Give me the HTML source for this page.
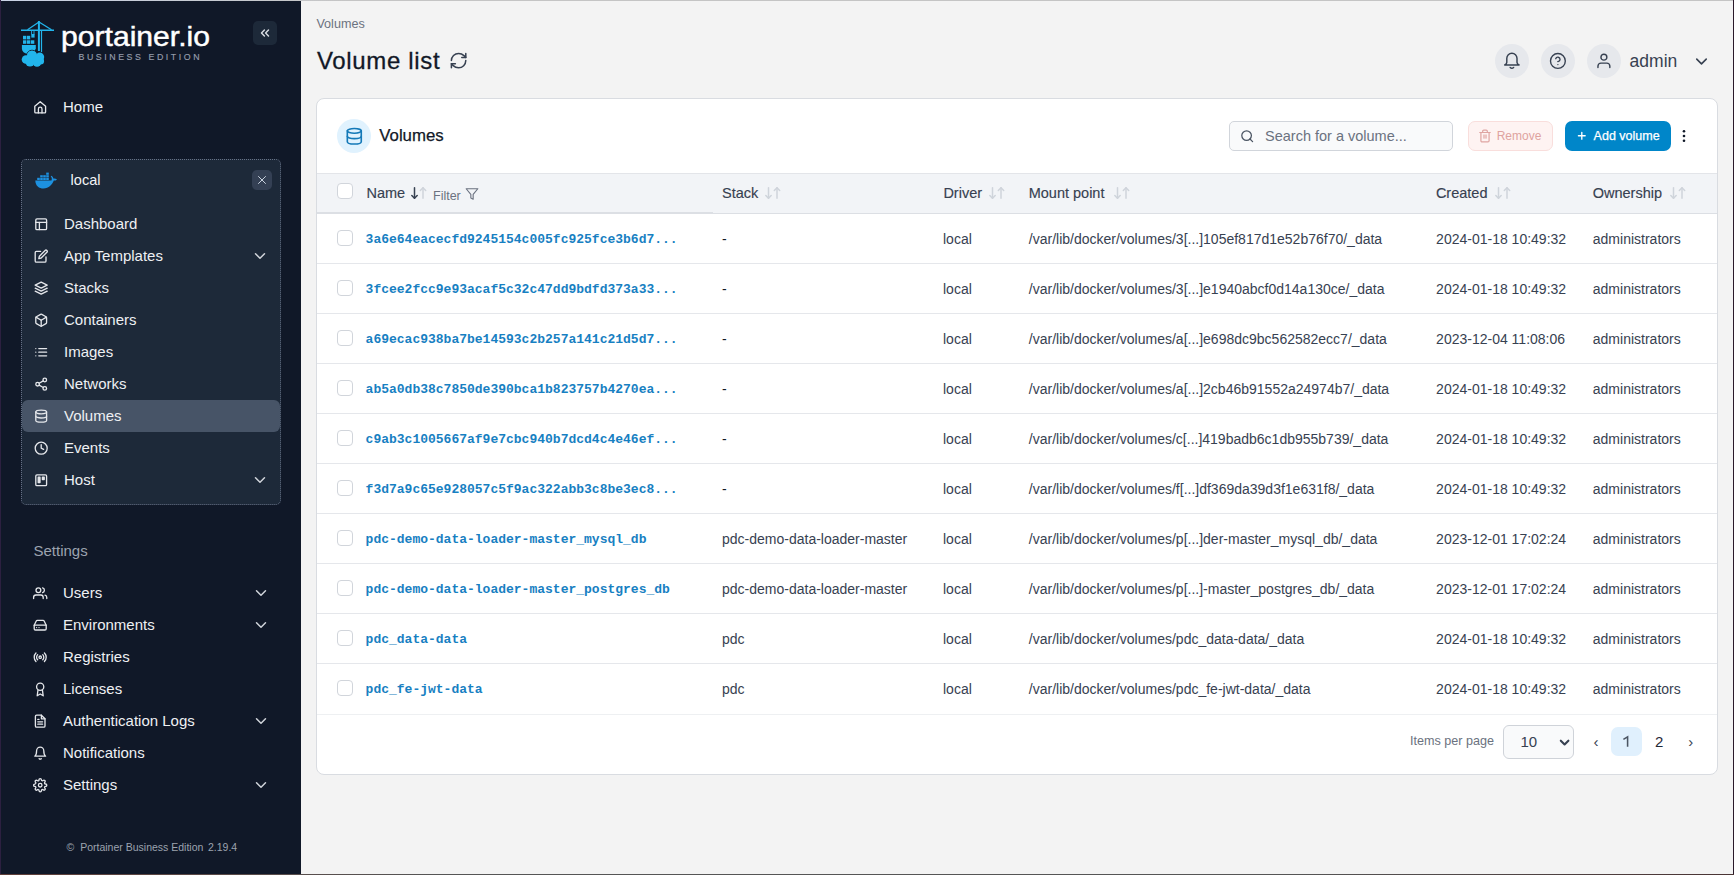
<!DOCTYPE html>
<html><head><meta charset="utf-8"><title>Volume list</title>
<style>
html,body{margin:0;padding:0;width:1734px;height:875px;overflow:hidden;background:#f3f3f3;}
body{position:relative;font-family:"Liberation Sans", sans-serif;}
.t{position:absolute;white-space:nowrap;line-height:1;}
.s{font-family:"Liberation Sans", sans-serif;}
.m{font-family:"Liberation Mono", monospace;}
.b{position:absolute;}
.ic{position:absolute;overflow:visible;}
</style></head><body>
<div class="b" style="left:0px;top:0px;width:301px;height:875px;background:#101828;"></div>
<svg class="ic" style="left:18px;top:18px;width:40px;height:52px" viewBox="18 18 40 52">
<g stroke="#22b5ec" fill="none" stroke-linecap="butt">
<line x1="21" y1="30.2" x2="54" y2="30.2" stroke-width="1.5"/>
<line x1="27.5" y1="29.8" x2="39" y2="22" stroke-width="1.3"/>
<line x1="39" y1="22" x2="51.5" y2="29.8" stroke-width="1.3"/>
<line x1="38.9" y1="21" x2="38.9" y2="51" stroke-width="2"/>
<line x1="41.5" y1="30.2" x2="41.5" y2="52" stroke-width="1.2"/>
<line x1="31.6" y1="30.5" x2="31.6" y2="34.5" stroke-width="0.9"/>
<line x1="34" y1="30.5" x2="34" y2="34.5" stroke-width="0.9"/>
</g>
<g fill="#22b5ec">
<rect x="31.3" y="34" width="3.3" height="3.6"/>
<rect x="23" y="35.8" width="3.3" height="3.6"/>
<rect x="26.9" y="35.8" width="3.3" height="3.6"/>
<rect x="23" y="40.3" width="3.3" height="3.5"/>
<rect x="26.9" y="40.3" width="3.3" height="3.5"/>
<rect x="30.8" y="40.3" width="3.5" height="3.5"/>
<path d="M21.9 45h13.9v3.5c-1 3.5-4 5.3-8 5.3c-3.5 0-5.9-2.5-5.9-5.5z"/>
</g>
<g fill="#22b5ec" stroke="#111827" stroke-width="0.9">
<circle cx="32" cy="55.5" r="5.3"/>
</g>
<g fill="#22b5ec">
<circle cx="39.8" cy="57" r="4.4"/>
<circle cx="26" cy="59.5" r="4.3"/>
<circle cx="30" cy="62" r="4.6"/>
<circle cx="37" cy="62.3" r="4.4"/>
<circle cx="40.5" cy="61" r="3.6"/>
<circle cx="32" cy="55.5" r="4.85"/>
<rect x="26" y="56" width="14" height="6"/>
</g></svg>
<svg class="ic" style="left:0;top:0;width:301px;height:80px" viewBox="0 0 301 80">
<text x="61" y="46.3" font-family="Liberation Sans" font-size="27.5" fill="#ffffff" stroke="#ffffff" stroke-width="0.45" textLength="149" lengthAdjust="spacingAndGlyphs">portainer.io</text>
<text x="78.5" y="59.7" font-family="Liberation Sans" font-weight="400" font-size="8.8" fill="#959dac" stroke="#959dac" stroke-width="0.15" textLength="121" lengthAdjust="spacing">BUSINESS EDITION</text>
</svg>
<div class="b" style="left:253px;top:21px;width:24px;height:24px;background:#1d2939;border-radius:5px;"></div>
<svg class="ic" style="left:258px;top:26px;width:14px;height:14px;" viewBox="0 0 24 24" fill="none" stroke="#d9dde3" stroke-width="2.5" stroke-linecap="round" stroke-linejoin="round"><polyline points="11 17 6 12 11 7"/><polyline points="18 17 13 12 18 7"/></svg>
<svg class="ic" style="left:32.599999999999994px;top:100.0px;width:14.4px;height:14.4px;" viewBox="0 0 24 24" fill="none" stroke="#e5e7eb" stroke-width="2.2" stroke-linecap="round" stroke-linejoin="round"><path d="M3 10.5 12 3l9 7.5V20a1.5 1.5 0 0 1-1.5 1.5h-15A1.5 1.5 0 0 1 3 20z"/><path d="M9 21.5V15a3 3 0 0 1 6 0v6.5"/></svg>
<div class="t s " style="left:63px;top:99.40px;font-size:15px;color:#eef0f3;">Home</div>
<div class="b" style="left:21px;top:159px;width:260px;height:346px;background:#1d2939;border:1px dotted #667085;border-radius:5px;box-sizing:border-box;"></div>
<svg class="ic" style="left:35px;top:171px;width:23px;height:19px" viewBox="0 0 23 19">
<g fill="#1d91e0">
<rect x="2.2" y="6.8" width="2.6" height="2.2"/><rect x="5.2" y="6.8" width="2.6" height="2.2"/><rect x="8.2" y="6.8" width="2.6" height="2.2"/><rect x="11.2" y="6.8" width="2.6" height="2.2"/>
<rect x="5.2" y="4.2" width="2.6" height="2.2"/><rect x="8.2" y="4.2" width="2.6" height="2.2"/><rect x="11.2" y="4.2" width="2.6" height="2.2"/>
<rect x="11.2" y="1.6" width="2.6" height="2.2"/>
<path d="M0.3 9.5h16.2c0.6-1.6 0.3-3 -0.8-4.2l0.8-0.6c1.2 0.8 1.8 1.8 1.8 2.9c1-0.3 2.5-0.2 3.7 0.8c-0.9 1-2 1.3-3.2 1.2c-1.6 4.2-5 7.9-10.3 7.9c-4.5 0-8-2.6-8.2-8z"/>
</g></svg>
<div class="t s " style="left:70.6px;top:172.63px;font-size:14.5px;color:#f3f4f6;">local</div>
<div class="b" style="left:252px;top:170px;width:20px;height:20px;background:#344054;border-radius:5px;"></div>
<svg class="ic" style="left:255px;top:173px;width:14px;height:14px;" viewBox="0 0 24 24" fill="none" stroke="#cbd5e1" stroke-width="1.7" stroke-linecap="round" stroke-linejoin="round"><line x1="18" y1="6" x2="6" y2="18"/><line x1="6" y1="6" x2="18" y2="18"/></svg>
<div class="b" style="left:22px;top:400px;width:258px;height:32px;background:#475467;border-radius:6px;"></div>
<svg class="ic" style="left:33.8px;top:216.60000000000002px;width:14.4px;height:14.4px;" viewBox="0 0 24 24" fill="none" stroke="#e5e7eb" stroke-width="2.2" stroke-linecap="round" stroke-linejoin="round"><rect x="3" y="3" width="18" height="18" rx="2"/><line x1="3" y1="9" x2="21" y2="9"/><line x1="9" y1="21" x2="9" y2="9"/></svg>
<div class="t s " style="left:64px;top:215.80px;font-size:15px;color:#eef0f3;">Dashboard</div>
<svg class="ic" style="left:33.8px;top:248.60000000000002px;width:14.4px;height:14.4px;" viewBox="0 0 24 24" fill="none" stroke="#e5e7eb" stroke-width="2.2" stroke-linecap="round" stroke-linejoin="round"><path d="M11 4H4a2 2 0 0 0-2 2v14a2 2 0 0 0 2 2h14a2 2 0 0 0 2-2v-7"/><path d="M18.5 2.5a2.121 2.121 0 0 1 3 3L12 15l-4 1 1-4 9.5-9.5z"/></svg>
<div class="t s " style="left:64px;top:247.80px;font-size:15px;color:#eef0f3;">App Templates</div>
<svg class="ic" style="left:251px;top:246.8px;width:18px;height:18px;" viewBox="0 0 24 24" fill="none" stroke="#d1d5db" stroke-width="2" stroke-linecap="round" stroke-linejoin="round"><polyline points="6 9 12 15 18 9"/></svg>
<svg class="ic" style="left:33.8px;top:280.6px;width:14.4px;height:14.4px;" viewBox="0 0 24 24" fill="none" stroke="#e5e7eb" stroke-width="2.2" stroke-linecap="round" stroke-linejoin="round"><polygon points="12 2 2 7 12 12 22 7 12 2"/><polyline points="2 17 12 22 22 17"/><polyline points="2 12 12 17 22 12"/></svg>
<div class="t s " style="left:64px;top:279.80px;font-size:15px;color:#eef0f3;">Stacks</div>
<svg class="ic" style="left:33.8px;top:312.6px;width:14.4px;height:14.4px;" viewBox="0 0 24 24" fill="none" stroke="#e5e7eb" stroke-width="2.2" stroke-linecap="round" stroke-linejoin="round"><path d="M21 16V8a2 2 0 0 0-1-1.73l-7-4a2 2 0 0 0-2 0l-7 4A2 2 0 0 0 3 8v8a2 2 0 0 0 1 1.73l7 4a2 2 0 0 0 2 0l7-4A2 2 0 0 0 21 16z"/><polyline points="3.27 6.96 12 12.01 20.73 6.96"/><line x1="12" y1="22.08" x2="12" y2="12"/></svg>
<div class="t s " style="left:64px;top:311.80px;font-size:15px;color:#eef0f3;">Containers</div>
<svg class="ic" style="left:33.8px;top:344.6px;width:14.4px;height:14.4px;" viewBox="0 0 24 24" fill="none" stroke="#e5e7eb" stroke-width="2.2" stroke-linecap="round" stroke-linejoin="round"><line x1="8" y1="6" x2="21" y2="6"/><line x1="8" y1="12" x2="21" y2="12"/><line x1="8" y1="18" x2="21" y2="18"/><line x1="3" y1="6" x2="3.01" y2="6"/><line x1="3" y1="12" x2="3.01" y2="12"/><line x1="3" y1="18" x2="3.01" y2="18"/></svg>
<div class="t s " style="left:64px;top:343.80px;font-size:15px;color:#eef0f3;">Images</div>
<svg class="ic" style="left:33.8px;top:376.6px;width:14.4px;height:14.4px;" viewBox="0 0 24 24" fill="none" stroke="#e5e7eb" stroke-width="2.2" stroke-linecap="round" stroke-linejoin="round"><circle cx="18" cy="5" r="3"/><circle cx="6" cy="12" r="3"/><circle cx="18" cy="19" r="3"/><line x1="8.59" y1="13.51" x2="15.42" y2="17.49"/><line x1="15.41" y1="6.51" x2="8.59" y2="10.49"/></svg>
<div class="t s " style="left:64px;top:375.80px;font-size:15px;color:#eef0f3;">Networks</div>
<svg class="ic" style="left:33.8px;top:408.6px;width:14.4px;height:14.4px;" viewBox="0 0 24 24" fill="none" stroke="#e5e7eb" stroke-width="2.2" stroke-linecap="round" stroke-linejoin="round"><ellipse cx="12" cy="5" rx="9" ry="3"/><path d="M21 12c0 1.66-4 3-9 3s-9-1.34-9-3"/><path d="M3 5v14c0 1.66 4 3 9 3s9-1.34 9-3V5"/></svg>
<div class="t s " style="left:64px;top:407.80px;font-size:15px;color:#eef0f3;">Volumes</div>
<svg class="ic" style="left:33.8px;top:440.6px;width:14.4px;height:14.4px;" viewBox="0 0 24 24" fill="none" stroke="#e5e7eb" stroke-width="2.2" stroke-linecap="round" stroke-linejoin="round"><circle cx="12" cy="12" r="10"/><polyline points="12 6 12 12 16 14"/></svg>
<div class="t s " style="left:64px;top:439.80px;font-size:15px;color:#eef0f3;">Events</div>
<svg class="ic" style="left:33.8px;top:472.6px;width:14.4px;height:14.4px;" viewBox="0 0 24 24" fill="none" stroke="#e5e7eb" stroke-width="2.2" stroke-linecap="round" stroke-linejoin="round"><rect x="3" y="3" width="18" height="18" rx="2"/><rect x="7" y="7" width="3" height="9" fill="#e5e7eb"/><rect x="14" y="7" width="3" height="4" fill="#e5e7eb"/></svg>
<div class="t s " style="left:64px;top:471.80px;font-size:15px;color:#eef0f3;">Host</div>
<svg class="ic" style="left:251px;top:470.8px;width:18px;height:18px;" viewBox="0 0 24 24" fill="none" stroke="#d1d5db" stroke-width="2" stroke-linecap="round" stroke-linejoin="round"><polyline points="6 9 12 15 18 9"/></svg>
<div class="t s " style="left:33.5px;top:543.30px;font-size:15px;color:#9ca3af;">Settings</div>
<svg class="ic" style="left:32.8px;top:585.5px;width:14.4px;height:14.4px;" viewBox="0 0 24 24" fill="none" stroke="#e5e7eb" stroke-width="2.2" stroke-linecap="round" stroke-linejoin="round"><path d="M17 21v-2a4 4 0 0 0-4-4H5a4 4 0 0 0-4 4v2"/><circle cx="9" cy="7" r="4"/><path d="M23 21v-2a4 4 0 0 0-3-3.87"/><path d="M16 3.13a4 4 0 0 1 0 7.75"/></svg>
<div class="t s " style="left:63px;top:585.10px;font-size:15px;color:#eef0f3;">Users</div>
<svg class="ic" style="left:252px;top:583.7px;width:18px;height:18px;" viewBox="0 0 24 24" fill="none" stroke="#d1d5db" stroke-width="2" stroke-linecap="round" stroke-linejoin="round"><polyline points="6 9 12 15 18 9"/></svg>
<svg class="ic" style="left:32.8px;top:617.5px;width:14.4px;height:14.4px;" viewBox="0 0 24 24" fill="none" stroke="#e5e7eb" stroke-width="2.2" stroke-linecap="round" stroke-linejoin="round"><line x1="22" y1="12" x2="2" y2="12"/><path d="M5.45 5.11L2 12v6a2 2 0 0 0 2 2h16a2 2 0 0 0 2-2v-6l-3.45-6.89A2 2 0 0 0 16.76 4H7.24a2 2 0 0 0-1.79 1.11z"/><line x1="6" y1="16" x2="6.01" y2="16"/><line x1="10" y1="16" x2="10.01" y2="16"/></svg>
<div class="t s " style="left:63px;top:617.10px;font-size:15px;color:#eef0f3;">Environments</div>
<svg class="ic" style="left:252px;top:615.7px;width:18px;height:18px;" viewBox="0 0 24 24" fill="none" stroke="#d1d5db" stroke-width="2" stroke-linecap="round" stroke-linejoin="round"><polyline points="6 9 12 15 18 9"/></svg>
<svg class="ic" style="left:32.8px;top:649.5px;width:14.4px;height:14.4px;" viewBox="0 0 24 24" fill="none" stroke="#e5e7eb" stroke-width="2.2" stroke-linecap="round" stroke-linejoin="round"><circle cx="12" cy="12" r="2"/><path d="M16.24 7.76a6 6 0 0 1 0 8.49m-8.48-.01a6 6 0 0 1 0-8.49m11.31-2.82a10 10 0 0 1 0 14.14m-14.14 0a10 10 0 0 1 0-14.14"/></svg>
<div class="t s " style="left:63px;top:649.10px;font-size:15px;color:#eef0f3;">Registries</div>
<svg class="ic" style="left:32.8px;top:681.5px;width:14.4px;height:14.4px;" viewBox="0 0 24 24" fill="none" stroke="#e5e7eb" stroke-width="2.2" stroke-linecap="round" stroke-linejoin="round"><circle cx="12" cy="8" r="6"/><polyline points="8.21 13.89 7 23 12 20 17 23 15.79 13.88"/></svg>
<div class="t s " style="left:63px;top:681.10px;font-size:15px;color:#eef0f3;">Licenses</div>
<svg class="ic" style="left:32.8px;top:713.5px;width:14.4px;height:14.4px;" viewBox="0 0 24 24" fill="none" stroke="#e5e7eb" stroke-width="2.2" stroke-linecap="round" stroke-linejoin="round"><path d="M14 2H6a2 2 0 0 0-2 2v16a2 2 0 0 0 2 2h12a2 2 0 0 0 2-2V8z"/><polyline points="14 2 14 8 20 8"/><line x1="16" y1="13" x2="8" y2="13"/><line x1="16" y1="17" x2="8" y2="17"/><polyline points="10 9 9 9 8 9"/></svg>
<div class="t s " style="left:63px;top:713.10px;font-size:15px;color:#eef0f3;">Authentication Logs</div>
<svg class="ic" style="left:252px;top:711.7px;width:18px;height:18px;" viewBox="0 0 24 24" fill="none" stroke="#d1d5db" stroke-width="2" stroke-linecap="round" stroke-linejoin="round"><polyline points="6 9 12 15 18 9"/></svg>
<svg class="ic" style="left:32.8px;top:745.5px;width:14.4px;height:14.4px;" viewBox="0 0 24 24" fill="none" stroke="#e5e7eb" stroke-width="2.2" stroke-linecap="round" stroke-linejoin="round"><path d="M18 8A6 6 0 0 0 6 8c0 7-3 9-3 9h18s-3-2-3-9"/><path d="M13.73 21a2 2 0 0 1-3.46 0"/></svg>
<div class="t s " style="left:63px;top:745.10px;font-size:15px;color:#eef0f3;">Notifications</div>
<svg class="ic" style="left:32.8px;top:777.5px;width:14.4px;height:14.4px;" viewBox="0 0 24 24" fill="none" stroke="#e5e7eb" stroke-width="2.2" stroke-linecap="round" stroke-linejoin="round"><circle cx="12" cy="12" r="3"/><path d="M19.4 15a1.65 1.65 0 0 0 .33 1.82l.06.06a2 2 0 0 1 0 2.83 2 2 0 0 1-2.83 0l-.06-.06a1.65 1.65 0 0 0-1.82-.33 1.65 1.65 0 0 0-1 1.51V21a2 2 0 0 1-2 2 2 2 0 0 1-2-2v-.09A1.65 1.65 0 0 0 9 19.4a1.65 1.65 0 0 0-1.82.33l-.06.06a2 2 0 0 1-2.830 0 2 2 0 0 1 0-2.83l.06-.06a1.65 1.65 0 0 0 .33-1.82 1.650 1.650 0 0 0-1.51-1H3a2 2 0 0 1-2-2 2 2 0 0 1 2-2h.09A1.65 1.65 0 0 0 4.6 9a1.65 1.65 0 0 0-.33-1.82l-.06-.06a2 2 0 0 1 0-2.83 2 2 0 0 1 2.83 0l.06.06a1.65 1.65 0 0 0 1.82.33H9a1.65 1.65 0 0 0 1-1.51V3a2 2 0 0 1 2-2 2 2 0 0 1 2 2v.09a1.65 1.65 0 0 0 1 1.51 1.65 1.65 0 0 0 1.82-.33l.06-.06a2 2 0 0 1 2.83 0 2 2 0 0 1 0 2.83l-.06.06a1.65 1.65 0 0 0-.33 1.82V9a1.65 1.65 0 0 0 1.51 1H21a2 2 0 0 1 2 2 2 2 0 0 1-2 2h-.09a1.65 1.65 0 0 0-1.51 1z"/></svg>
<div class="t s " style="left:63px;top:777.10px;font-size:15px;color:#eef0f3;">Settings</div>
<svg class="ic" style="left:252px;top:775.7px;width:18px;height:18px;" viewBox="0 0 24 24" fill="none" stroke="#d1d5db" stroke-width="2" stroke-linecap="round" stroke-linejoin="round"><polyline points="6 9 12 15 18 9"/></svg>
<div class="t s " style="left:66.5px;top:842.21px;font-size:10.5px;color:#9ca3af;">&copy;</div>
<div class="t s " style="left:80.2px;top:842.21px;font-size:10.5px;color:#9ca3af;">Portainer Business Edition</div>
<div class="t s " style="left:208px;top:842.21px;font-size:10.5px;color:#9ca3af;">2.19.4</div>
<div class="b" style="left:301px;top:0px;width:1433px;height:875px;background:#f3f3f3;"></div>
<div class="t s " style="left:316.4px;top:17.53px;font-size:12.6px;color:#6b7280;">Volumes</div>
<div class="t s " style="left:317px;top:49.08px;font-size:24px;color:#111827;letter-spacing:0.65px;-webkit-text-stroke:0.3px #111827;">Volume list</div>
<svg class="ic" style="left:449.4px;top:51.4px;width:19.2px;height:19.2px;" viewBox="0 0 24 24" fill="none" stroke="#374151" stroke-width="1.9" stroke-linecap="round" stroke-linejoin="round"><path d="M3 12a9 9 0 0 1 9-9 9.75 9.75 0 0 1 6.74 2.74L21 8"/><path d="M21 3v5h-5"/><path d="M21 12a9 9 0 0 1-9 9 9.75 9.75 0 0 1-6.74-2.74L3 16"/><path d="M8 16H3v5"/></svg>
<div class="b" style="left:1495px;top:44px;width:34px;height:34px;background:#e6e8ec;border-radius:50%;"></div>
<div class="b" style="left:1541px;top:44px;width:34px;height:34px;background:#e6e8ec;border-radius:50%;"></div>
<div class="b" style="left:1587px;top:44px;width:34px;height:34px;background:#e6e8ec;border-radius:50%;"></div>
<svg class="ic" style="left:1500px;top:50px;width:24px;height:22px" viewBox="1500 50 24 22" fill="none" stroke="#374151" stroke-width="1.45" stroke-linecap="round" stroke-linejoin="round"><path d="M1506.8 58.3A5.1 5.1 0 0 1 1517 58.3V62.3Q1517.2 64.2 1519.1 64.9H1504.7Q1506.6 64.2 1506.8 62.3Z"/><path d="M1510.2 67.4Q1511.9 69.2 1513.6 67.4"/></svg>
<svg class="ic" style="left:1549.1px;top:52.300000000000004px;width:17.8px;height:17.8px;" viewBox="0 0 24 24" fill="none" stroke="#374151" stroke-width="1.85" stroke-linecap="round" stroke-linejoin="round"><circle cx="12" cy="12" r="10"/><path d="M9.09 9a3 3 0 0 1 5.83 1c0 2-3 3-3 3"/><line x1="12" y1="17" x2="12.01" y2="17"/></svg>
<svg class="ic" style="left:1595.3px;top:52.4px;width:17.8px;height:17.8px;" viewBox="0 0 24 24" fill="none" stroke="#374151" stroke-width="1.9" stroke-linecap="round" stroke-linejoin="round"><path d="M20 21v-2a4 4 0 0 0-4-4H8a4 4 0 0 0-4 4v2"/><circle cx="12" cy="7" r="4"/></svg>
<div class="t s " style="left:1629.6px;top:52.79px;font-size:17.5px;color:#374151;">admin</div>
<svg class="ic" style="left:1691.5px;top:51.5px;width:19px;height:19px;" viewBox="0 0 24 24" fill="none" stroke="#374151" stroke-width="2" stroke-linecap="round" stroke-linejoin="round"><polyline points="6 9 12 15 18 9"/></svg>
<div class="b" style="left:316px;top:98px;width:1402px;height:677px;background:#fff;border:1px solid #d9dce1;border-radius:8px;box-sizing:border-box;"></div>
<div class="b" style="left:337px;top:118.6px;width:34px;height:34px;background:#e0f2fe;border-radius:50%;"></div>
<svg class="ic" style="left:344.7px;top:126.7px;width:18.6px;height:18.6px;" viewBox="0 0 24 24" fill="none" stroke="#1479b8" stroke-width="2.1" stroke-linecap="round" stroke-linejoin="round"><ellipse cx="12" cy="5" rx="9" ry="3"/><path d="M21 12c0 1.66-4 3-9 3s-9-1.34-9-3"/><path d="M3 5v14c0 1.66 4 3 9 3s9-1.34 9-3V5"/></svg>
<div class="t s " style="left:379.3px;top:128.28px;font-size:16.8px;color:#111827;-webkit-text-stroke:0.25px #111827;">Volumes</div>
<div class="b" style="left:1229px;top:121px;width:224px;height:30px;background:#f9fafb;border:1px solid #d1d5db;border-radius:5px;box-sizing:border-box;"></div>
<svg class="ic" style="left:1239.8px;top:128.8px;width:14.4px;height:14.4px;" viewBox="0 0 24 24" fill="none" stroke="#4b5563" stroke-width="2.1" stroke-linecap="round" stroke-linejoin="round"><circle cx="11" cy="11" r="8"/><line x1="21" y1="21" x2="16.65" y2="16.65"/></svg>
<div class="t s " style="left:1265px;top:128.53px;font-size:14.5px;color:#6b7280;">Search for a volume...</div>
<div class="b" style="left:1468px;top:121px;width:85px;height:30px;background:#fef3f2;border:1px solid #f9dedc;border-radius:7px;box-sizing:border-box;"></div>
<svg class="ic" style="left:1478.2px;top:128.9px;width:14px;height:14px;" viewBox="0 0 24 24" fill="none" stroke="#dfa5a2" stroke-width="2.1" stroke-linecap="round" stroke-linejoin="round"><path d="M3 6h18"/><path d="M19 6v14a2 2 0 0 1-2 2H7a2 2 0 0 1-2-2V6"/><path d="M8 6V4a2 2 0 0 1 2-2h4a2 2 0 0 1 2 2v2"/><rect x="8.5" y="9.5" width="7" height="7" fill="#ecc4c2" stroke="none"/></svg>
<div class="t s " style="left:1496.7px;top:130.34px;font-size:12px;color:#dfa3a0;">Remove</div>
<div class="b" style="left:1565px;top:121px;width:106px;height:30px;background:#0086c9;border-radius:7px;"></div>
<svg class="ic" style="left:1576.2px;top:130.2px;width:11.6px;height:11.6px;" viewBox="0 0 24 24" fill="none" stroke="#ffffff" stroke-width="2.8" stroke-linecap="round" stroke-linejoin="round"><line x1="12" y1="5" x2="12" y2="19"/><line x1="5" y1="12" x2="19" y2="12"/></svg>
<div class="t s " style="left:1593.6px;top:130.02px;font-size:12.5px;color:#ffffff;-webkit-text-stroke:0.25px #fff;">Add volume</div>
<svg class="ic" style="left:1678px;top:126px;width:12px;height:20px" viewBox="1678 126 12 20"><g fill="#101828"><circle cx="1684" cy="131.3" r="1.3"/><circle cx="1684" cy="136" r="1.3"/><circle cx="1684" cy="140.7" r="1.3"/></g></svg>
<div class="b" style="left:317px;top:173px;width:1400px;height:1px;background:#e3e5e9;"></div>
<div class="b" style="left:317px;top:174px;width:1400px;height:39px;background:#f2f4f7;"></div>
<div class="b" style="left:317px;top:213px;width:1400px;height:1px;background:#dcdfe4;"></div>
<div class="b" style="left:317px;top:212px;width:396px;height:1px;background:#dcdfe4;"></div>
<div class="b" style="left:337px;top:183px;width:16px;height:16px;background:#fff;border:1px solid #d1d5db;border-radius:4px;box-sizing:border-box;"></div>
<div class="t s " style="left:366.5px;top:186.33px;font-size:14.5px;color:#374151;-webkit-text-stroke:0.15px #374151;">Name</div>
<svg class="ic" style="left:411px;top:187px;width:16px;height:12px" viewBox="0 0 16 12" fill="none" stroke-width="1.5" stroke-linecap="round" stroke-linejoin="round"><g stroke="#374151"><line x1="3.5" y1="0.8" x2="3.5" y2="11.2"/><polyline points="0.8 8.5 3.5 11.2 6.2 8.5"/></g><g stroke="#cfd4db"><line x1="12" y1="11.2" x2="12" y2="0.8"/><polyline points="9.3 3.5 12 0.8 14.7 3.5"/></g></svg>
<div class="t s " style="left:433px;top:189.82px;font-size:12.5px;color:#6b7280;">Filter</div>
<svg class="ic" style="left:465px;top:187.3px;width:14px;height:14px;" viewBox="0 0 24 24" fill="none" stroke="#6b7280" stroke-width="1.9" stroke-linecap="round" stroke-linejoin="round"><polygon points="22 3 2 3 10 12.46 10 19 14 21 14 12.46 22 3"/></svg>
<div class="t s " style="left:722px;top:186.33px;font-size:14.5px;color:#374151;-webkit-text-stroke:0.15px #374151;">Stack</div>
<svg class="ic" style="left:765.2px;top:187px;width:16px;height:12px" viewBox="0 0 16 12" fill="none" stroke-width="1.5" stroke-linecap="round" stroke-linejoin="round"><g stroke="#cfd4db"><line x1="3.5" y1="0.8" x2="3.5" y2="11.2"/><polyline points="0.8 8.5 3.5 11.2 6.2 8.5"/></g><g stroke="#cfd4db"><line x1="12" y1="11.2" x2="12" y2="0.8"/><polyline points="9.3 3.5 12 0.8 14.7 3.5"/></g></svg>
<div class="t s " style="left:943.4px;top:186.33px;font-size:14.5px;color:#374151;-webkit-text-stroke:0.15px #374151;">Driver</div>
<svg class="ic" style="left:989.2px;top:187px;width:16px;height:12px" viewBox="0 0 16 12" fill="none" stroke-width="1.5" stroke-linecap="round" stroke-linejoin="round"><g stroke="#cfd4db"><line x1="3.5" y1="0.8" x2="3.5" y2="11.2"/><polyline points="0.8 8.5 3.5 11.2 6.2 8.5"/></g><g stroke="#cfd4db"><line x1="12" y1="11.2" x2="12" y2="0.8"/><polyline points="9.3 3.5 12 0.8 14.7 3.5"/></g></svg>
<div class="t s " style="left:1028.7px;top:186.33px;font-size:14.5px;color:#374151;-webkit-text-stroke:0.15px #374151;">Mount point</div>
<svg class="ic" style="left:1114.3px;top:187px;width:16px;height:12px" viewBox="0 0 16 12" fill="none" stroke-width="1.5" stroke-linecap="round" stroke-linejoin="round"><g stroke="#cfd4db"><line x1="3.5" y1="0.8" x2="3.5" y2="11.2"/><polyline points="0.8 8.5 3.5 11.2 6.2 8.5"/></g><g stroke="#cfd4db"><line x1="12" y1="11.2" x2="12" y2="0.8"/><polyline points="9.3 3.5 12 0.8 14.7 3.5"/></g></svg>
<div class="t s " style="left:1435.9px;top:186.33px;font-size:14.5px;color:#374151;-webkit-text-stroke:0.15px #374151;">Created</div>
<svg class="ic" style="left:1495.3px;top:187px;width:16px;height:12px" viewBox="0 0 16 12" fill="none" stroke-width="1.5" stroke-linecap="round" stroke-linejoin="round"><g stroke="#cfd4db"><line x1="3.5" y1="0.8" x2="3.5" y2="11.2"/><polyline points="0.8 8.5 3.5 11.2 6.2 8.5"/></g><g stroke="#cfd4db"><line x1="12" y1="11.2" x2="12" y2="0.8"/><polyline points="9.3 3.5 12 0.8 14.7 3.5"/></g></svg>
<div class="t s " style="left:1592.7px;top:186.33px;font-size:14.5px;color:#374151;-webkit-text-stroke:0.15px #374151;">Ownership</div>
<svg class="ic" style="left:1670px;top:187px;width:16px;height:12px" viewBox="0 0 16 12" fill="none" stroke-width="1.5" stroke-linecap="round" stroke-linejoin="round"><g stroke="#cfd4db"><line x1="3.5" y1="0.8" x2="3.5" y2="11.2"/><polyline points="0.8 8.5 3.5 11.2 6.2 8.5"/></g><g stroke="#cfd4db"><line x1="12" y1="11.2" x2="12" y2="0.8"/><polyline points="9.3 3.5 12 0.8 14.7 3.5"/></g></svg>
<div class="b" style="left:317px;top:263px;width:1400px;height:1px;background:#e5e7eb;"></div>
<div class="b" style="left:337px;top:230px;width:16px;height:16px;background:#fff;border:1px solid #d1d5db;border-radius:4px;box-sizing:border-box;"></div>
<div class="t m " style="left:365.6px;top:232.84px;font-size:13px;color:#1780c2;font-weight:700;">3a6e64eacecfd9245154c005fc925fce3b6d7...</div>
<div class="t s " style="left:722px;top:231.55px;font-size:14px;color:#111827;">-</div>
<div class="t s " style="left:943px;top:231.55px;font-size:14px;color:#374151;">local</div>
<div class="t s " style="left:1028.8px;top:231.55px;font-size:14px;color:#374151;">/var/lib/docker/volumes/3[...]105ef817d1e52b76f70/_data</div>
<div class="t s " style="left:1436.1px;top:231.55px;font-size:14px;color:#374151;">2024-01-18 10:49:32</div>
<div class="t s " style="left:1592.8px;top:231.55px;font-size:14px;color:#374151;">administrators</div>
<div class="b" style="left:317px;top:313px;width:1400px;height:1px;background:#e5e7eb;"></div>
<div class="b" style="left:337px;top:280px;width:16px;height:16px;background:#fff;border:1px solid #d1d5db;border-radius:4px;box-sizing:border-box;"></div>
<div class="t m " style="left:365.6px;top:282.84px;font-size:13px;color:#1780c2;font-weight:700;">3fcee2fcc9e93acaf5c32c47dd9bdfd373a33...</div>
<div class="t s " style="left:722px;top:281.55px;font-size:14px;color:#111827;">-</div>
<div class="t s " style="left:943px;top:281.55px;font-size:14px;color:#374151;">local</div>
<div class="t s " style="left:1028.8px;top:281.55px;font-size:14px;color:#374151;">/var/lib/docker/volumes/3[...]e1940abcf0d14a130ce/_data</div>
<div class="t s " style="left:1436.1px;top:281.55px;font-size:14px;color:#374151;">2024-01-18 10:49:32</div>
<div class="t s " style="left:1592.8px;top:281.55px;font-size:14px;color:#374151;">administrators</div>
<div class="b" style="left:317px;top:363px;width:1400px;height:1px;background:#e5e7eb;"></div>
<div class="b" style="left:337px;top:330px;width:16px;height:16px;background:#fff;border:1px solid #d1d5db;border-radius:4px;box-sizing:border-box;"></div>
<div class="t m " style="left:365.6px;top:332.84px;font-size:13px;color:#1780c2;font-weight:700;">a69ecac938ba7be14593c2b257a141c21d5d7...</div>
<div class="t s " style="left:722px;top:331.55px;font-size:14px;color:#111827;">-</div>
<div class="t s " style="left:943px;top:331.55px;font-size:14px;color:#374151;">local</div>
<div class="t s " style="left:1028.8px;top:331.55px;font-size:14px;color:#374151;">/var/lib/docker/volumes/a[...]e698dc9bc562582ecc7/_data</div>
<div class="t s " style="left:1436.1px;top:331.55px;font-size:14px;color:#374151;">2023-12-04 11:08:06</div>
<div class="t s " style="left:1592.8px;top:331.55px;font-size:14px;color:#374151;">administrators</div>
<div class="b" style="left:317px;top:413px;width:1400px;height:1px;background:#e5e7eb;"></div>
<div class="b" style="left:337px;top:380px;width:16px;height:16px;background:#fff;border:1px solid #d1d5db;border-radius:4px;box-sizing:border-box;"></div>
<div class="t m " style="left:365.6px;top:382.84px;font-size:13px;color:#1780c2;font-weight:700;">ab5a0db38c7850de390bca1b823757b4270ea...</div>
<div class="t s " style="left:722px;top:381.55px;font-size:14px;color:#111827;">-</div>
<div class="t s " style="left:943px;top:381.55px;font-size:14px;color:#374151;">local</div>
<div class="t s " style="left:1028.8px;top:381.55px;font-size:14px;color:#374151;">/var/lib/docker/volumes/a[...]2cb46b91552a24974b7/_data</div>
<div class="t s " style="left:1436.1px;top:381.55px;font-size:14px;color:#374151;">2024-01-18 10:49:32</div>
<div class="t s " style="left:1592.8px;top:381.55px;font-size:14px;color:#374151;">administrators</div>
<div class="b" style="left:317px;top:463px;width:1400px;height:1px;background:#e5e7eb;"></div>
<div class="b" style="left:337px;top:430px;width:16px;height:16px;background:#fff;border:1px solid #d1d5db;border-radius:4px;box-sizing:border-box;"></div>
<div class="t m " style="left:365.6px;top:432.84px;font-size:13px;color:#1780c2;font-weight:700;">c9ab3c1005667af9e7cbc940b7dcd4c4e46ef...</div>
<div class="t s " style="left:722px;top:431.55px;font-size:14px;color:#111827;">-</div>
<div class="t s " style="left:943px;top:431.55px;font-size:14px;color:#374151;">local</div>
<div class="t s " style="left:1028.8px;top:431.55px;font-size:14px;color:#374151;">/var/lib/docker/volumes/c[...]419badb6c1db955b739/_data</div>
<div class="t s " style="left:1436.1px;top:431.55px;font-size:14px;color:#374151;">2024-01-18 10:49:32</div>
<div class="t s " style="left:1592.8px;top:431.55px;font-size:14px;color:#374151;">administrators</div>
<div class="b" style="left:317px;top:513px;width:1400px;height:1px;background:#e5e7eb;"></div>
<div class="b" style="left:337px;top:480px;width:16px;height:16px;background:#fff;border:1px solid #d1d5db;border-radius:4px;box-sizing:border-box;"></div>
<div class="t m " style="left:365.6px;top:482.84px;font-size:13px;color:#1780c2;font-weight:700;">f3d7a9c65e928057c5f9ac322abb3c8be3ec8...</div>
<div class="t s " style="left:722px;top:481.55px;font-size:14px;color:#111827;">-</div>
<div class="t s " style="left:943px;top:481.55px;font-size:14px;color:#374151;">local</div>
<div class="t s " style="left:1028.8px;top:481.55px;font-size:14px;color:#374151;">/var/lib/docker/volumes/f[...]df369da39d3f1e631f8/_data</div>
<div class="t s " style="left:1436.1px;top:481.55px;font-size:14px;color:#374151;">2024-01-18 10:49:32</div>
<div class="t s " style="left:1592.8px;top:481.55px;font-size:14px;color:#374151;">administrators</div>
<div class="b" style="left:317px;top:563px;width:1400px;height:1px;background:#e5e7eb;"></div>
<div class="b" style="left:337px;top:530px;width:16px;height:16px;background:#fff;border:1px solid #d1d5db;border-radius:4px;box-sizing:border-box;"></div>
<div class="t m " style="left:365.6px;top:532.84px;font-size:13px;color:#1780c2;font-weight:700;">pdc-demo-data-loader-master_mysql_db</div>
<div class="t s " style="left:722px;top:531.55px;font-size:14px;color:#374151;">pdc-demo-data-loader-master</div>
<div class="t s " style="left:943px;top:531.55px;font-size:14px;color:#374151;">local</div>
<div class="t s " style="left:1028.8px;top:531.55px;font-size:14px;color:#374151;">/var/lib/docker/volumes/p[...]der-master_mysql_db/_data</div>
<div class="t s " style="left:1436.1px;top:531.55px;font-size:14px;color:#374151;">2023-12-01 17:02:24</div>
<div class="t s " style="left:1592.8px;top:531.55px;font-size:14px;color:#374151;">administrators</div>
<div class="b" style="left:317px;top:613px;width:1400px;height:1px;background:#e5e7eb;"></div>
<div class="b" style="left:337px;top:580px;width:16px;height:16px;background:#fff;border:1px solid #d1d5db;border-radius:4px;box-sizing:border-box;"></div>
<div class="t m " style="left:365.6px;top:582.84px;font-size:13px;color:#1780c2;font-weight:700;">pdc-demo-data-loader-master_postgres_db</div>
<div class="t s " style="left:722px;top:581.55px;font-size:14px;color:#374151;">pdc-demo-data-loader-master</div>
<div class="t s " style="left:943px;top:581.55px;font-size:14px;color:#374151;">local</div>
<div class="t s " style="left:1028.8px;top:581.55px;font-size:14px;color:#374151;">/var/lib/docker/volumes/p[...]-master_postgres_db/_data</div>
<div class="t s " style="left:1436.1px;top:581.55px;font-size:14px;color:#374151;">2023-12-01 17:02:24</div>
<div class="t s " style="left:1592.8px;top:581.55px;font-size:14px;color:#374151;">administrators</div>
<div class="b" style="left:317px;top:663px;width:1400px;height:1px;background:#e5e7eb;"></div>
<div class="b" style="left:337px;top:630px;width:16px;height:16px;background:#fff;border:1px solid #d1d5db;border-radius:4px;box-sizing:border-box;"></div>
<div class="t m " style="left:365.6px;top:632.84px;font-size:13px;color:#1780c2;font-weight:700;">pdc_data-data</div>
<div class="t s " style="left:722px;top:631.55px;font-size:14px;color:#374151;">pdc</div>
<div class="t s " style="left:943px;top:631.55px;font-size:14px;color:#374151;">local</div>
<div class="t s " style="left:1028.8px;top:631.55px;font-size:14px;color:#374151;">/var/lib/docker/volumes/pdc_data-data/_data</div>
<div class="t s " style="left:1436.1px;top:631.55px;font-size:14px;color:#374151;">2024-01-18 10:49:32</div>
<div class="t s " style="left:1592.8px;top:631.55px;font-size:14px;color:#374151;">administrators</div>
<div class="b" style="left:317px;top:714px;width:1400px;height:1px;background:#eef0f2;"></div>
<div class="b" style="left:337px;top:680px;width:16px;height:16px;background:#fff;border:1px solid #d1d5db;border-radius:4px;box-sizing:border-box;"></div>
<div class="t m " style="left:365.6px;top:682.84px;font-size:13px;color:#1780c2;font-weight:700;">pdc_fe-jwt-data</div>
<div class="t s " style="left:722px;top:681.55px;font-size:14px;color:#374151;">pdc</div>
<div class="t s " style="left:943px;top:681.55px;font-size:14px;color:#374151;">local</div>
<div class="t s " style="left:1028.8px;top:681.55px;font-size:14px;color:#374151;">/var/lib/docker/volumes/pdc_fe-jwt-data/_data</div>
<div class="t s " style="left:1436.1px;top:681.55px;font-size:14px;color:#374151;">2024-01-18 10:49:32</div>
<div class="t s " style="left:1592.8px;top:681.55px;font-size:14px;color:#374151;">administrators</div>
<div class="t s " style="left:1409.9px;top:735.43px;font-size:12.6px;color:#6b7280;">Items per page</div>
<div class="b" style="left:1503px;top:725px;width:71px;height:34px;background:#f9fafb;border:1px solid #cfd3d9;border-radius:6px;box-sizing:border-box;"></div>
<div class="t s " style="left:1520.4px;top:734.10px;font-size:15px;color:#374151;">10</div>
<svg class="ic" style="left:1557.4px;top:734.6px;width:15.2px;height:15.2px;" viewBox="0 0 24 24" fill="none" stroke="#374151" stroke-width="3.3" stroke-linecap="round" stroke-linejoin="round"><polyline points="6 9 12 15 18 9"/></svg>
<div class="t s " style="left:1593.5px;top:733.80px;font-size:15px;color:#374151;">&lsaquo;</div>
<div class="b" style="left:1611px;top:727px;width:31px;height:29px;background:#e0f0fd;border-radius:7px;"></div>
<svg class="ic" style="left:1618px;top:732px;width:16px;height:18px" viewBox="1618 732 16 18" fill="none" stroke="#4b5563" stroke-width="1.55" stroke-linecap="butt" stroke-linejoin="miter"><path d="M1627.6 746.8V736.9L1623.4 739.4"/></svg>
<div class="t s " style="left:1655px;top:734.10px;font-size:15px;color:#1f2937;">2</div>
<div class="t s " style="left:1688.3px;top:733.80px;font-size:15px;color:#374151;">&rsaquo;</div>
<div class="b" style="left:0px;top:0px;width:1734px;height:1px;background:linear-gradient(90deg,#c9d3e6,#c4c4c4 20%,#c4c4c4);"></div>
<div class="b" style="left:0px;top:0px;width:1px;height:875px;background:#2c2040;"></div>
<div class="b" style="left:1733px;top:0px;width:1px;height:875px;background:#2a1a2a;"></div>
<div class="b" style="left:0px;top:874px;width:1734px;height:1px;background:linear-gradient(90deg,#5e3d38,#555 25%,#555 75%,#4a3434);"></div>
</body></html>
